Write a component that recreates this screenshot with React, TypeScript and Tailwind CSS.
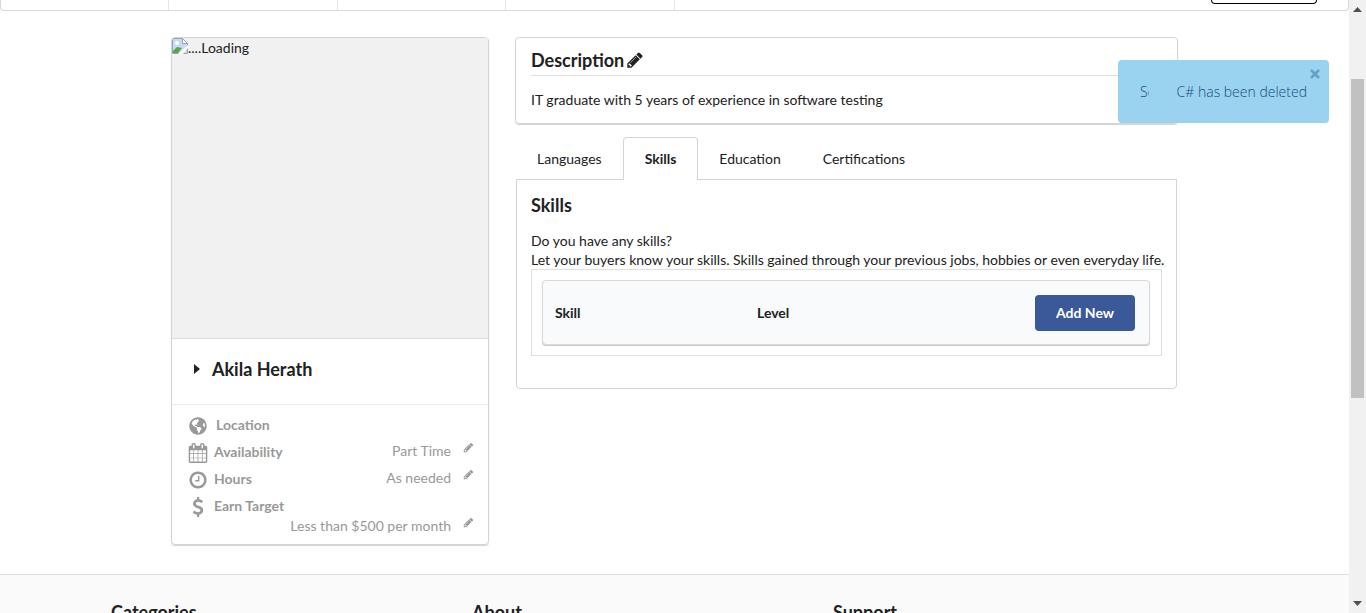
import { useState } from "react";
import type { ReactNode } from "react";
import { FaGlobeAmericas } from "react-icons/fa";

const CLOCK =
  "M1024 544v448q0 14-9 23t-23 9h-320q-14 0-23-9t-9-23v-64q0-14 9-23t23-9h224v-352q0-14 9-23t23-9h64q14 0 23 9t9 23zm416 352q0-148-73-273t-198-198-273-73-273 73-198 198-73 273 73 273 198 198 273 73 273-73 198-198 73-273zm224 0q0 209-103 385.5t-279.5 279.5-385.5 103-385.5-103-279.5-279.5-103-385.5 103-385.5 279.5-279.5 385.5-103 385.5 103 279.5 279.5 103 385.5z";
const PENCIL =
  "M491 1536l91-91-235-235-91 91v107h128v128h107zm523-928q0-22-22-22-10 0-17 7l-542 542q-7 7-7 17 0 22 22 22 10 0 17-7l542-542q7-7 7-17zm-54-192l416 416-832 832h-416v-416zm683 96q0 53-37 90l-166 166-416-416 166-165q36-38 90-38 53 0 91 38l235 234q37 39 37 91z";
const CALENDAR =
  "M192 1664h288v-288h-288v288zm352 0h320v-288h-320v288zm-352-352h288v-320h-288v320zm352 0h320v-320h-320v320zm-352-384h288v-288h-288v288zm736 736h320v-288h-320v288zm-384-736h320v-288h-320v288zm768 736h288v-288h-288v288zm-384-352h320v-320h-320v320zm-352-864v-288q0-13-9.5-22.5t-22.5-9.5h-64q-13 0-22.5 9.5t-9.5 22.5v288q0 13 9.5 22.5t22.5 9.5h64q13 0 22.5-9.5t9.5-22.5zm736 864h288v-320h-288v320zm-384-384h320v-288h-320v288zm384 0h288v-288h-288v288zm32-480v-288q0-13-9.5-22.5t-22.5-9.5h-64q-13 0-22.5 9.5t-9.5 22.5v288q0 13 9.5 22.5t22.5 9.5h64q13 0 22.5-9.5t9.5-22.5zm384-64v1280q0 52-38 90t-90 38h-1408q-52 0-90-38t-38-90v-1280q0-52 38-90t90-38h128v-96q0-66 47-113t113-47h64q66 0 113 47t47 113v96h384v-96q0-66 47-113t113-47h64q66 0 113 47t47 113v96h128q52 0 90 38t38 90z";
const DOLLAR =
  "M1362 1185q0 153-99.5 263.5t-258.5 136.5v175q0 14-9 23t-23 9h-135q-13 0-22.5-9.5t-9.5-22.5v-175q-66-9-127.5-31t-101.5-44.5-74-48-46.5-37.5-17.5-18q-17-21-2-41l103-135q7-10 23-12 15-2 24 9l2 2q113 99 243 125 37 8 74 8 81 0 142.5-43t61.5-122q0-28-15-53t-33.5-42-58.5-37.5-66-32-80-32.5q-39-16-61.5-25t-61.5-26.5-62.5-31-56.5-35.5-53.5-42.5-43.5-49-35.5-58-21-66.5-8.5-78q0-138 98-242t255-134v-180q0-13 9.5-22.5t22.5-9.5h135q14 0 23 9t9 23v176q57 6 110.5 23t87 33.5 63.5 37.5 39 29 15 14q17 18 5 38l-81 146q-8 15-23 16-14 3-27-7-3-3-14.5-12t-39-26.5-58.5-32-74.5-26-85.5-11.5q-95 0-155 43t-60 111q0 26 8.5 48t29.5 41.5 39.5 33 56 31 60.5 27 70 27.5q53 20 81 31.5t76 35 75.5 42.5 62 50 53 63.5 31.5 76.5 13 94z";

function Glyph({ d, className }: { d: string; className: string }) {
  return (
    <svg viewBox="0 0 1792 1792" fill="currentColor" className={className} aria-hidden="true">
      <path d={d} />
    </svg>
  );
}

function BrokenImage() {
  return (
    <svg width="16" height="16" viewBox="0 0 16 16" className="shrink-0" aria-hidden="true">
      <path d="M.5 .5h10l5 5v10h-15z" fill="#c6d9f5" stroke="#9aa3b0" />
      <path d="M10.500 .5v5h5z" fill="#fff" stroke="#9aa3b0" />
      <circle cx="5" cy="5" r="2" fill="#fff" />
      <path d="M1 15v-2l4-4 5 1-4 5z" fill="#56a83f" />
      <path d="M6 16l10-9v3l-5 6z" fill="#fff" />
    </svg>
  );
}

function ProfileRow({
  icon,
  label,
  value,
  wrap = false,
}: {
  icon: ReactNode;
  label: string;
  value?: string;
  wrap?: boolean;
}) {
  return (
    <li className={wrap ? "flex flex-col" : "flex h-[27px] items-start justify-between"}>
      <span className={value ? "flex h-5 items-center gap-1.5 font-bold" : "flex h-5 items-center gap-2 font-bold"}>
        <span className="flex w-5 justify-center pt-0.5">{icon}</span>
        {label}
      </span>
      {value && (
        <span className={wrap ? "flex h-5 items-start gap-3 self-end" : "-mt-px flex h-5 items-start gap-3"}>
          <span>{value}</span>
          <button type="button" aria-label={`Edit ${label}`} className="pt-px">
            <Glyph d={PENCIL} className="size-[11px]" />
          </button>
        </span>
      )}
    </li>
  );
}

const tabs = ["Languages", "Skills", "Education", "Certifications"];

export default function App() {
  const [active, setActive] = useState("Skills");
  return (
    <div className="relative flex h-screen overflow-hidden bg-white font-['Lato','Liberation_Sans',sans-serif] text-sm leading-5 text-[#212121]">
      <div className="flex min-w-0 flex-1 flex-col overflow-hidden">
        <header className="relative grid h-[11px] shrink-0 grid-cols-8 rounded-b border border-t-0 border-[#d9d9da]">
          <span className="border-r border-[#e6e6e6]" />
          <span className="border-r border-[#e6e6e6]" />
          <span className="border-r border-[#e6e6e6]" />
          <span className="border-r border-[#e6e6e6]" />
          <button
            type="button"
            aria-label="Account"
            className="absolute top-0 right-[31px] h-1 w-[106px] rounded-b border border-t-0 border-black"
          />
        </header>

        <main className="mx-auto flex w-full max-w-[1007px] shrink-0 items-start gap-[26px] pt-[26px] pb-[29px]">
          <section className="w-[318px] shrink-0 overflow-hidden rounded border border-[#d4d4d5] shadow-[0_1px_1px_#d4d4d5]">
            <div className="flex h-[300px] items-start bg-[#f1f1f1]">
              <BrokenImage />
              <span>....Loading</span>
            </div>
            <div className="flex h-[66px] items-center gap-3 border-t border-[#dcdcdc] pb-1.5 pl-[22px]">
              <svg width="6" height="10" viewBox="0 0 6 10" aria-hidden="true">
                <path d="M0 0l6 5-6 5z" fill="#212121" />
              </svg>
              <h1 className="text-lg font-bold">Akila Herath</h1>
            </div>
            <ul className="border-t border-[#ececec] py-2.5 pr-[14px] pb-2 pl-4 text-[#999]">
              <ProfileRow icon={<FaGlobeAmericas className="size-[18px]" />} label="Location" />
              <ProfileRow icon={<Glyph d={CALENDAR} className="size-5" />} label="Availability" value="Part Time" />
              <ProfileRow icon={<Glyph d={CLOCK} className="size-5" />} label="Hours" value="As needed" />
              <ProfileRow
                icon={<Glyph d={DOLLAR} className="size-5" />}
                label="Earn Target"
                value="Less than $500 per month"
                wrap
              />
            </ul>
          </section>

          <div className="min-w-0 flex-1">
            <section className="rounded border border-[#d4d4d5] px-[15px] pt-3 pb-[13px] shadow-[0_1px_1px_#d4d4d5]">
              <h2 className="flex items-center gap-0.5 border-b border-[#dededf] pb-[5px] text-lg leading-5 font-bold">
                Description
                <button type="button" aria-label="Edit description">
                  <Glyph d={PENCIL} className="size-[18px]" />
                </button>
              </h2>
              <p className="pt-[14px]">IT graduate with 5 years of experience in software testing</p>
            </section>

            <div className="px-px pt-[13px]">
              <div role="tablist" className="flex">
                {tabs.map((tab) => (
                  <button
                    key={tab}
                    type="button"
                    role="tab"
                    aria-selected={tab === active}
                    onClick={() => setActive(tab)}
                    className={
                      tab === active
                        ? "relative z-10 -mb-px h-[43px] rounded-t border border-b-0 border-[#d4d4d5] bg-white px-[21px] font-bold"
                        : "h-[42px] px-[21px] pt-px"
                    }
                  >
                    {tab}
                  </button>
                ))}
              </div>
              <section className="rounded-b border border-[#d4d4d5] px-[14px] pt-[15px] pb-8">
                <h2 className="text-lg leading-5 font-bold">Skills</h2>
                <p className="pt-4 leading-[19px] lg:whitespace-nowrap">
                  Do you have any skills?
                  <br />
                  Let your buyers know your skills. Skills gained through your previous jobs, hobbies or even everyday
                  life.
                </p>
                <div className="border border-[#e0e0e1] py-2.5 pr-[11px] pl-2.5">
                  <div className="rounded border border-[#d9d9da] bg-[#f9fafb] shadow-[0_1px_1px_#c8c8c9]">
                    <table className="w-full table-fixed text-left">
                      <thead>
                        <tr className="h-[63px]">
                          <th className="w-1/3 pl-3 font-bold">Skill</th>
                          <th className="w-1/3 pl-3 font-bold">Level</th>
                          <th className="w-1/3 pr-[14px] text-right">
                            <button
                              type="button"
                              className="h-9 w-[100px] rounded bg-[#3b5998] text-center font-bold text-white"
                            >
                              Add New
                            </button>
                          </th>
                        </tr>
                      </thead>
                    </table>
                  </div>
                </div>
              </section>
            </div>
          </div>
        </main>

        <footer className="grow border-t border-[#dededf] bg-[#fafafa] pt-[23px]">
          <div className="grid grid-cols-3 pr-[155px] pl-[111px] text-lg font-bold">
            <h3>Categories</h3>
            <h3>About</h3>
            <h3>Support</h3>
          </div>
        </footer>
      </div>

      <div className="flex w-[17px] shrink-0 flex-col items-center bg-[#f1f1f1]" aria-hidden="true">
        <svg width="9" height="5" viewBox="0 0 9 5" className="mt-[7px] shrink-0">
          <path d="M4.500 0L9 5H0z" fill="#505050" />
        </svg>
        <div className="mt-[67px] h-[319px] w-[13px] shrink-0 bg-[#c1c1c1]" />
        <svg width="9" height="5" viewBox="0 0 9 5" className="mt-auto mb-[7px] shrink-0">
          <path d="M0 0h9L4.500 5z" fill="#505050" />
        </svg>
      </div>

      <div
        role="status"
        className="absolute top-[60px] right-[37px] z-20 flex h-[63px] w-[211px] items-center rounded bg-[#99d3f0] px-[22px] font-['Open_Sans','Noto_Sans',sans-serif] text-sm font-light text-[#1f4a78]"
      >
        <span className="w-[9px] overflow-hidden">Se</span>
        <span className="ml-auto whitespace-nowrap">C# has been deleted</span>
        <button type="button" aria-label="Close" className="absolute top-[9px] right-[9px] text-[#62a2c5]">
          <svg width="10" height="10" viewBox="0 0 10 10" fill="none" stroke="currentColor" strokeWidth="2.500">
            <path d="M1 1l8 8M9 1l-8 8" />
          </svg>
        </button>
      </div>
    </div>
  );
}
